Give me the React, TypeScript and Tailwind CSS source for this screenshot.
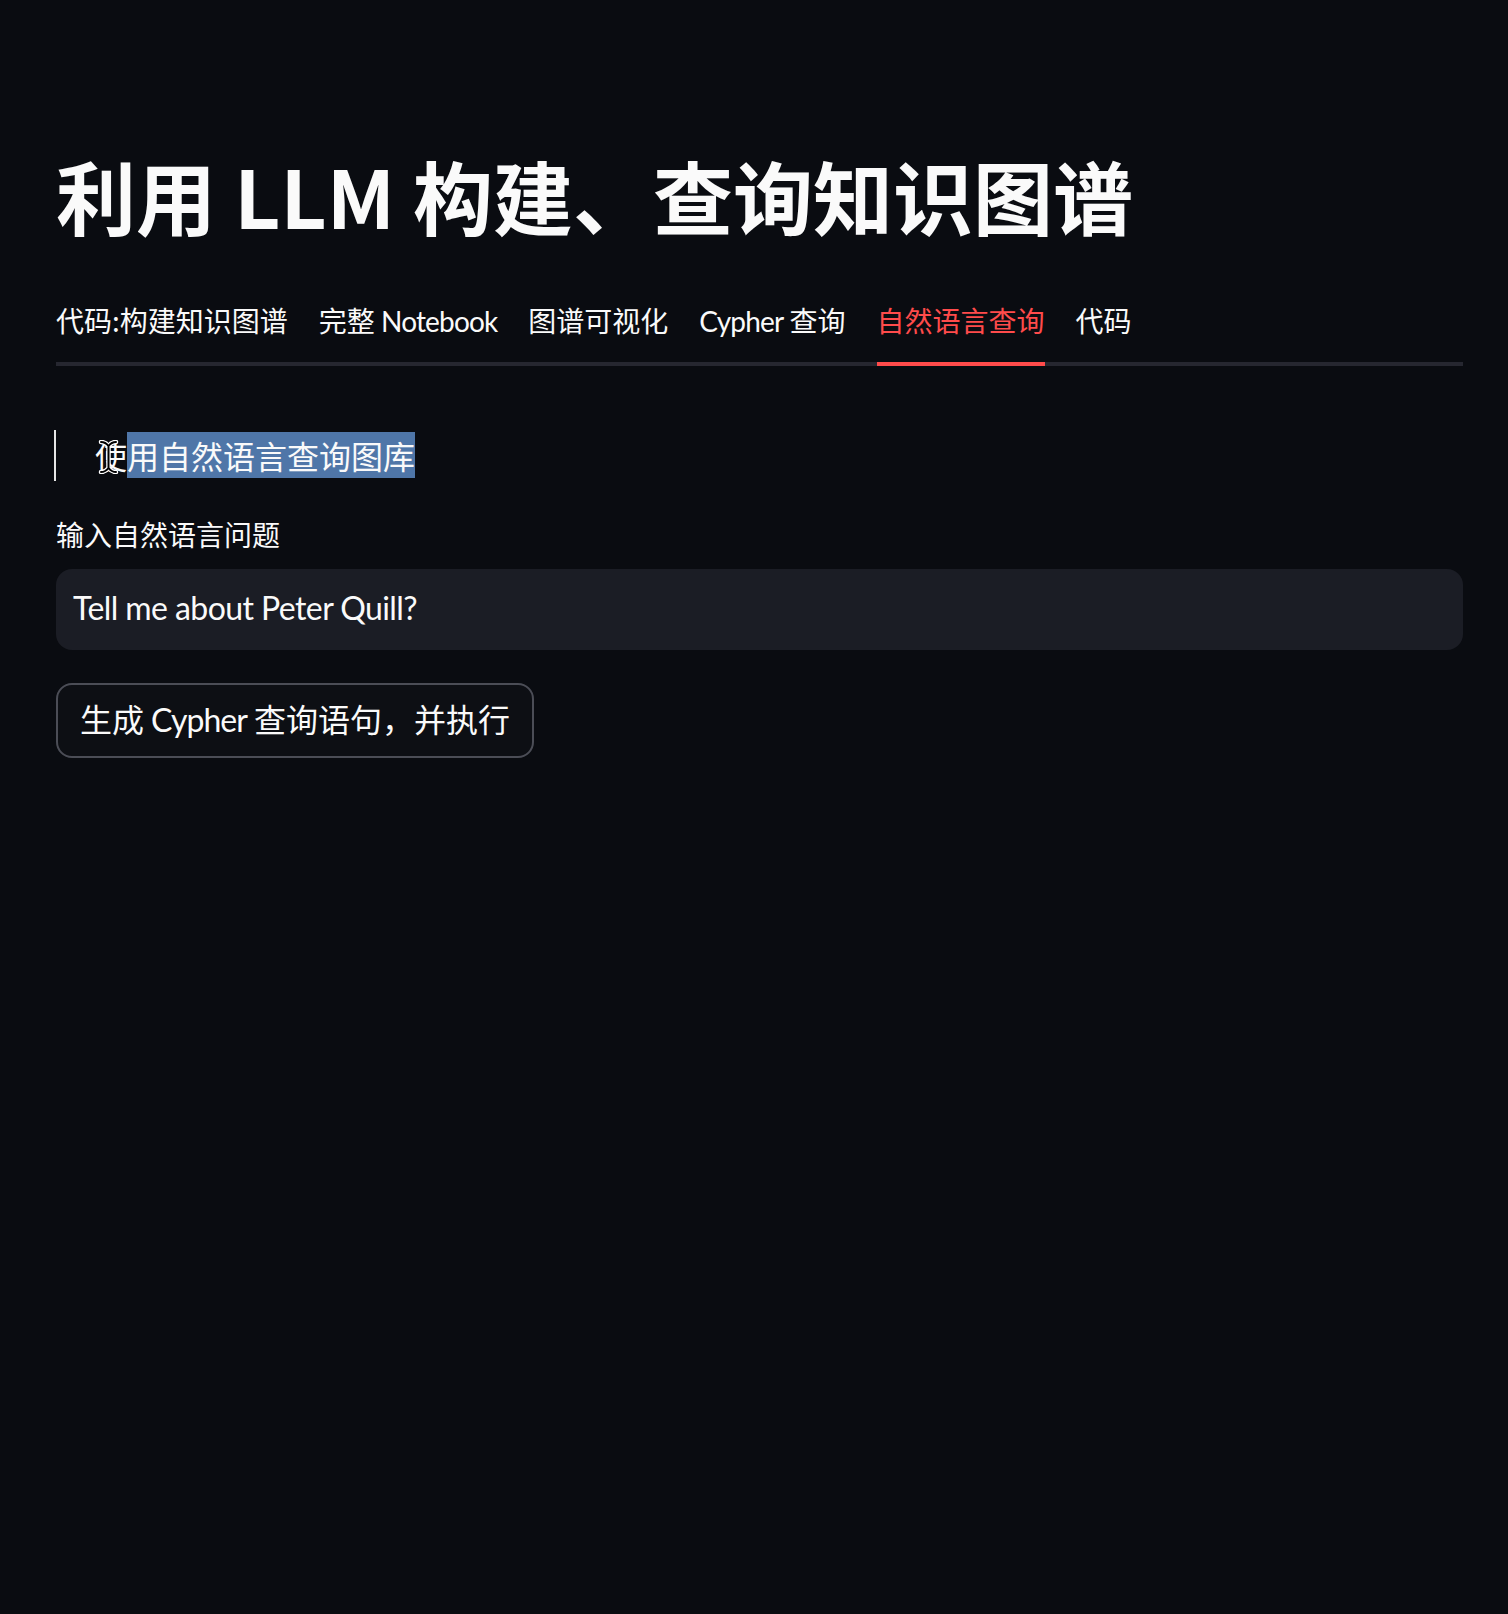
import React from "react";

// the reference's latin runs are narrower than Noto CJK's latin; Lato, slightly tightened, is closer
function L({ children, className = "tracking-[-0.03em]" }: { children: React.ReactNode; className?: string }) {
  return <span className={"font-['Lato','Noto_Sans_CJK_SC',sans-serif] " + className}>{children}</span>;
}

const tabs: React.ReactNode[] = [
  "代码:构建知识图谱",
  <>完整 <L>Notebook</L></>,
  "图谱可视化",
  <><L>Cypher</L> 查询</>,
  "自然语言查询",
  "代码",
];
const activeTab = 4;

function IBeam() {
  const d =
    "M3 2 C7 2 9 4 10.5 6 C12 4 14 2 18 2 M10.5 6 V28 M3 32 C7 32 9 30 10.5 28 C12 30 14 32 18 32";
  return (
    <svg
      className="absolute left-[3px] top-[8px] h-[34px] w-[21px]"
      viewBox="0 0 21 34"
      fill="none"
      aria-hidden="true"
    >
      <path d={d} stroke="#ffffff" strokeWidth="4.5" strokeLinecap="round" />
      <path d={d} stroke="#000000" strokeWidth="2" strokeLinecap="round" />
    </svg>
  );
}

export default function App() {
  return (
    <div className="min-h-screen bg-[#0a0c11] font-['Noto_Sans_CJK_SC','Noto_Sans',sans-serif] text-[#fafafa]">
      <div className="pl-[56px] pr-[45px] pt-[146px]">
        <h1 className="text-[80px] font-bold leading-[96px]">利用 LLM 构建、查询知识图谱</h1>

        <div className="mt-[57px] flex gap-[31px] border-b-4 border-[#262730]">
          {tabs.map((t, i) => (
            <button
              key={i}
              type="button"
              className={
                i === activeTab
                  ? "-mb-1 h-[67px] border-b-4 border-[#ff4b4b] pb-[21px] text-[28px] leading-[42px] text-[#ff4b4b]"
                  : "h-[63px] pb-[21px] text-[28px] leading-[42px] text-[#fafafa]"
              }
            >
              {t}
            </button>
          ))}
        </div>

        <blockquote className="-ml-[2px] mt-[64px] border-l-2 border-[#e6e6e6] pl-[39px] text-[32px] leading-[51px]">
          <span className="relative">
            使<IBeam />
          </span>
          <span className="bg-[#4f76a8]">用自然语言查询图库</span>
        </blockquote>

        <div className="mt-[32px] text-[28px] leading-[42px]">输入自然语言问题</div>

        <div className="mt-[14px] flex h-[81px] items-center rounded-[16px] bg-[#1b1d25] px-[17px] pb-[4px] text-[32px]">
          <L className="tracking-[-0.018em]">Tell me about Peter Quill?</L>
        </div>

        <button
          type="button"
          className="mt-[33px] flex h-[75px] w-[478px] items-center justify-center rounded-[16px] border-2 border-[#4b4d56] bg-[#0d0f14] pb-[4px] text-[32px]"
        >
          <span>
            生成 <L>Cypher</L> 查询语句，并执行
          </span>
        </button>
      </div>
    </div>
  );
}
